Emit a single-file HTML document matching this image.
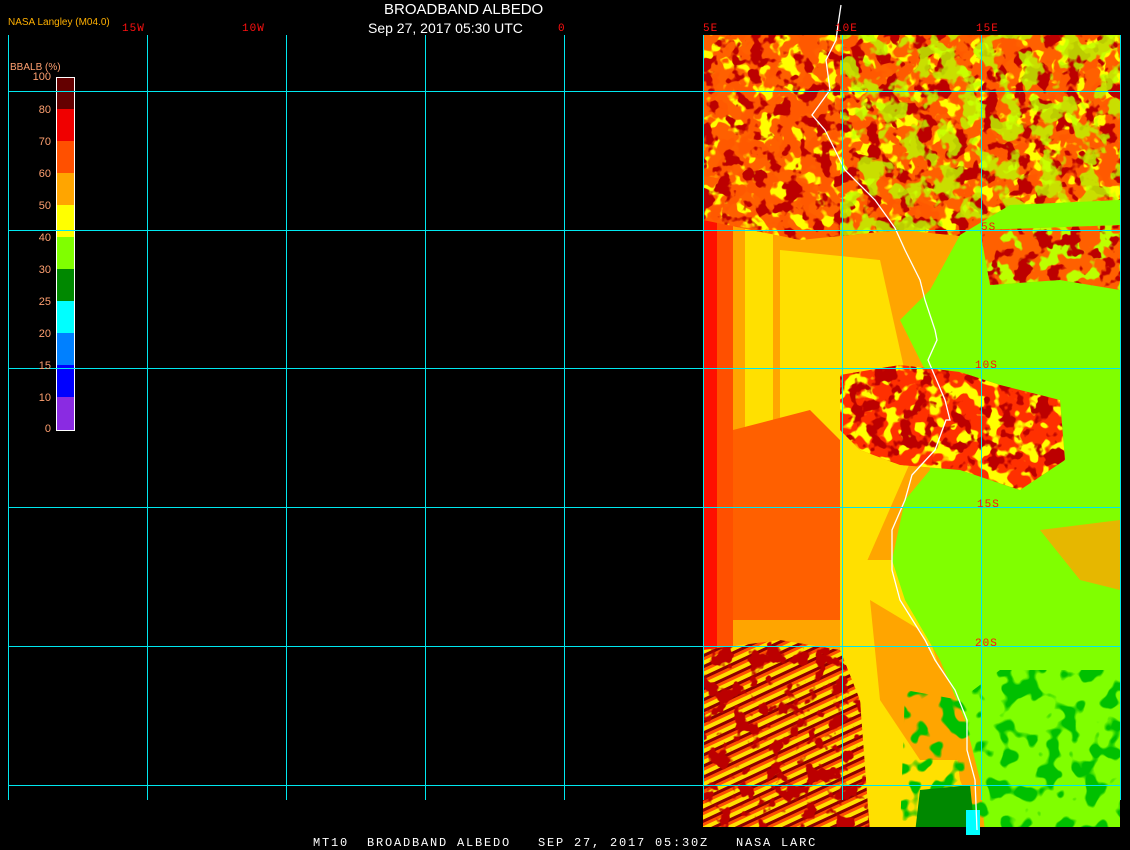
<!DOCTYPE html>
<html><head><meta charset="utf-8"><style>
html,body{margin:0;padding:0;background:#000;width:1130px;height:850px;overflow:hidden}
body{position:relative;font-family:"Liberation Sans",sans-serif}
.t{position:absolute;white-space:nowrap}
.lab{position:absolute;color:#ff1010;font-family:"Liberation Mono",monospace;font-size:11px;letter-spacing:1px}
.cb{position:absolute;color:#ffa070;font-size:11px;text-align:right;width:30px;left:21px}
</style></head><body>
<svg width="1130" height="850" style="position:absolute;left:0;top:0">
<defs>
<filter id="n1" x="0" y="0" width="100%" height="100%">
<feTurbulence type="fractalNoise" baseFrequency="0.06" numOctaves="3" seed="4"/>
<feColorMatrix type="matrix" values="0 0 0 0 0.5  0 0 0 0 0  0 0 0 0 0  0 0 0 -14 6.4"/>
</filter>
<filter id="n1b" x="0" y="0" width="100%" height="100%">
<feTurbulence type="fractalNoise" baseFrequency="0.05" numOctaves="3" seed="11"/>
<feColorMatrix type="matrix" values="0 0 0 0 1  0 0 0 0 0.1  0 0 0 0 0  0 0 0 -14 7"/>
</filter>
<filter id="n2" x="0" y="0" width="100%" height="100%">
<feTurbulence type="fractalNoise" baseFrequency="0.05" numOctaves="3" seed="9"/>
<feColorMatrix type="matrix" values="0 0 0 0 0.5  0 0 0 0 1  0 0 0 0 0  0 0 0 -14 6.8"/>
</filter>
<filter id="n3" x="0" y="0" width="100%" height="100%">
<feTurbulence type="fractalNoise" baseFrequency="0.07" numOctaves="2" seed="2"/>
<feColorMatrix type="matrix" values="0 0 0 0 1  0 0 0 0 1  0 0 0 0 0  0 0 0 -14 6.8"/>
</filter>
<filter id="n4" x="0" y="0" width="100%" height="100%">
<feTurbulence type="fractalNoise" baseFrequency="0.05" numOctaves="2" seed="7"/>
<feColorMatrix type="matrix" values="0 0 0 0 0  0 0 0 0 0.53  0 0 0 0 0  0 0 0 -14 6.5"/>
</filter>
<pattern id="str" width="14" height="10" patternUnits="userSpaceOnUse" patternTransform="rotate(-25)">
<rect width="14" height="10" fill="#ffe000"/><rect width="14" height="3" fill="#8b0000"/><rect y="3" width="14" height="3" fill="#ff5000"/>
</pattern>
<clipPath id="cl"><rect x="703" y="35" width="417" height="792"/></clipPath>
<clipPath id="ctop"><polygon points="703,35 1120,35 1120,200 1000,240 900,230 800,240 703,220"/></clipPath>
<clipPath id="cband"><polygon points="840,375 900,365 960,372 1000,385 1060,400 1065,460 1020,490 960,470 900,465 860,450 840,430"/></clipPath>
<clipPath id="cne"><polygon points="980,230 1120,225 1120,290 1060,280 990,285"/></clipPath>
<clipPath id="csw"><polygon points="703,650 780,640 840,650 860,700 870,833 703,833"/></clipPath>
<clipPath id="cse"><polygon points="905,690 960,700 1000,670 1120,670 1120,833 900,833"/></clipPath>
</defs>
<g clip-path="url(#cl)">
<rect x="703" y="35" width="417" height="800" fill="#ffa500"/>
<rect x="703" y="35" width="14" height="800" fill="#ff1000"/>
<rect x="717" y="35" width="16" height="800" fill="#ff5000"/>
<rect x="745" y="150" width="28" height="330" fill="#ffe000"/>
<polygon points="780,250 880,260 920,440 850,600 810,560 780,480" fill="#ffe000"/>
<polygon points="733,430 810,410 840,440 840,620 733,620" fill="#ff6000"/>
<polygon points="840,560 900,560 930,640 950,700 960,780 980,830 850,830 840,700" fill="#ffe000"/>
<polygon points="870,600 920,630 955,700 965,760 920,760 880,700" fill="#ffa500"/>
<g clip-path="url(#ctop)">
<rect x="703" y="35" width="417" height="210" fill="#ff6000"/>
<rect x="703" y="35" width="417" height="210" filter="url(#n3)"/>
<rect x="703" y="35" width="417" height="210" filter="url(#n1b)"/>
<rect x="703" y="35" width="417" height="210" filter="url(#n1)"/>
<rect x="840" y="35" width="280" height="210" filter="url(#n2)" opacity=".8"/>
</g>
<polygon points="1120,200 1010,205 960,235 930,290 900,320 930,380 930,470 905,500 892,560 905,600 940,660 965,720 980,780 985,833 1120,833" fill="#80ff00"/>
<g clip-path="url(#cne)">
<rect x="980" y="220" width="140" height="75" fill="#ff6000"/>
<rect x="980" y="220" width="140" height="75" filter="url(#n2)"/>
<rect x="980" y="220" width="140" height="75" filter="url(#n1)"/>
</g>
<polygon points="1040,530 1120,520 1120,590 1080,580" fill="#ffa500" opacity=".8"/>
<g clip-path="url(#cband)">
<rect x="840" y="360" width="230" height="130" fill="#ff3000"/>
<rect x="840" y="360" width="230" height="130" filter="url(#n3)"/>
<rect x="840" y="360" width="230" height="130" filter="url(#n1)"/>
</g>
<g clip-path="url(#cse)"><rect x="900" y="660" width="220" height="175" filter="url(#n4)"/></g>
<polygon points="920,790 970,785 975,833 915,833" fill="#008800"/>
<g clip-path="url(#csw)">
<rect x="703" y="640" width="170" height="195" fill="url(#str)"/>
<rect x="703" y="640" width="170" height="195" filter="url(#n1)"/>
</g>
</g>
<rect x="0" y="827" width="1130" height="30" fill="#000"/>
<rect x="966" y="810" width="14" height="25" fill="#00ffff"/>
<polyline fill="none" stroke="#fff" stroke-width="1.3" points="841,5 838,25 836,40 826,60 830,90 812,115 825,130 845,170 875,200 895,228 905,250 920,280 925,300 935,330 937,340 928,360 945,400 950,420 946,420 935,450 912,475 905,500 892,530 892,570 900,600 925,640 935,660 955,690 967,720 967,750 975,780 977,830"/>
<g stroke="#00e8f0" stroke-width="1">
<line x1="8.5" y1="35" x2="8.5" y2="800"/><line x1="147.5" y1="35" x2="147.5" y2="800"/>
<line x1="286.5" y1="35" x2="286.5" y2="800"/><line x1="425.5" y1="35" x2="425.5" y2="800"/>
<line x1="564.5" y1="35" x2="564.5" y2="800"/><line x1="703.5" y1="35" x2="703.5" y2="800"/>
<line x1="842.5" y1="35" x2="842.5" y2="800"/><line x1="981.5" y1="35" x2="981.5" y2="800"/>
<line x1="1120.5" y1="35" x2="1120.5" y2="800"/>
<line x1="8" y1="91.5" x2="1121" y2="91.5"/><line x1="8" y1="230.5" x2="1121" y2="230.5"/>
<line x1="8" y1="368.5" x2="1121" y2="368.5"/><line x1="8" y1="507.5" x2="1121" y2="507.5"/>
<line x1="8" y1="646.5" x2="1121" y2="646.5"/><line x1="8" y1="785.5" x2="1121" y2="785.5"/>
</g>
<g>
<rect x="57" y="77" width="17" height="32" fill="#640000"/>
<rect x="57" y="109" width="17" height="32" fill="#f00000"/>
<rect x="57" y="141" width="17" height="32" fill="#ff5000"/>
<rect x="57" y="173" width="17" height="32" fill="#ffa500"/>
<rect x="57" y="205" width="17" height="32" fill="#ffff00"/>
<rect x="57" y="237" width="17" height="32" fill="#80ff00"/>
<rect x="57" y="269" width="17" height="32" fill="#008800"/>
<rect x="57" y="301" width="17" height="32" fill="#00ffff"/>
<rect x="57" y="333" width="17" height="32" fill="#0080ff"/>
<rect x="57" y="365" width="17" height="32" fill="#0000ff"/>
<rect x="57" y="397" width="17" height="33" fill="#8a2be2"/>
<rect x="56.5" y="77.5" width="18" height="353" fill="none" stroke="#fff" stroke-width="1"/>
<line x1="8" y1="91.5" x2="120" y2="91.5" stroke="#00e8f0"/>
<line x1="8" y1="230.5" x2="120" y2="230.5" stroke="#00e8f0"/>
<line x1="8" y1="368.5" x2="120" y2="368.5" stroke="#00e8f0"/>
</g>
</svg>
<div class="t" style="left:384px;top:1px;color:#fff;font-size:15px">BROADBAND ALBEDO</div>
<div class="t" style="left:368px;top:20px;color:#fff;font-size:14px">Sep 27, 2017 05:30 UTC</div>
<div class="t" style="left:8px;top:17px;color:#ffb000;font-size:10px">NASA Langley (M04.0)</div>
<div class="t" style="left:10px;top:62px;color:#ffa070;font-size:10px">BBALB (%)</div>
<div class="lab" style="left:122px;top:23px">15W</div>
<div class="lab" style="left:242px;top:23px">10W</div>
<div class="lab" style="left:558px;top:23px">0</div>
<div class="lab" style="left:703px;top:23px">5E</div>
<div class="lab" style="left:835px;top:23px">10E</div>
<div class="lab" style="left:976px;top:23px">15E</div>
<div class="lab" style="left:981px;top:222px">5S</div>
<div class="lab" style="left:975px;top:360px">10S</div>
<div class="lab" style="left:977px;top:499px">15S</div>
<div class="lab" style="left:975px;top:638px">20S</div>
<div class="cb" style="top:71px">100</div>
<div class="cb" style="top:104px">80</div>
<div class="cb" style="top:136px">70</div>
<div class="cb" style="top:168px">60</div>
<div class="cb" style="top:200px">50</div>
<div class="cb" style="top:232px">40</div>
<div class="cb" style="top:264px">30</div>
<div class="cb" style="top:296px">25</div>
<div class="cb" style="top:328px">20</div>
<div class="cb" style="top:360px">15</div>
<div class="cb" style="top:392px">10</div>
<div class="cb" style="top:423px">0</div>
<div class="t" style="left:313px;top:836px;color:#fff;font-family:'Liberation Mono',monospace;font-size:12px;letter-spacing:1.8px">MT10&nbsp; BROADBAND ALBEDO&nbsp;&nbsp; SEP 27, 2017 05:30Z&nbsp;&nbsp; NASA LARC</div>
</body></html>
